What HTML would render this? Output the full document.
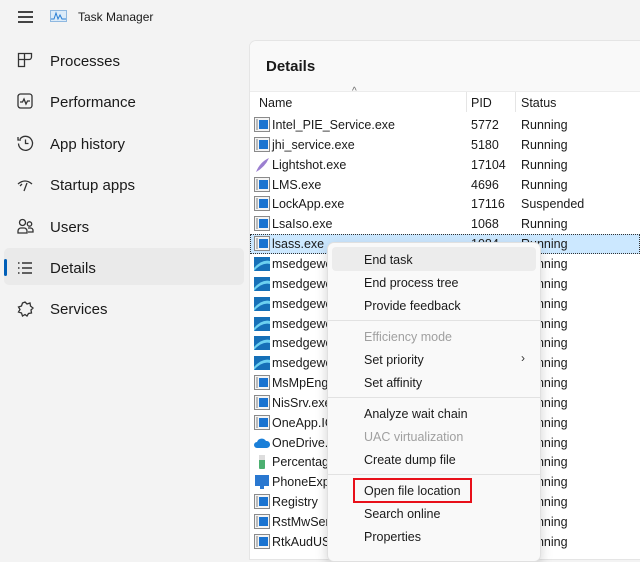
<!DOCTYPE html>
<html><head><meta charset="utf-8"><style>
*{margin:0;padding:0;box-sizing:border-box}
body{width:640px;height:552px;overflow:hidden;background:#f3f3f3;font-family:"Segoe UI","Liberation Sans",sans-serif;color:#1a1a1a;position:relative}
.a{position:absolute}
.nav{position:absolute;left:50px;font-size:15px;line-height:20px}
.ic{position:absolute;left:17px}
.row{position:absolute;left:250px;width:390px;height:20px;font-size:12.5px;line-height:20px}
.row .n{position:absolute;left:22px}
.row .p{position:absolute;left:221px}
.row .s{position:absolute;left:271px}
.row svg{position:absolute;left:4px;top:2px}
.mi{position:absolute;left:364px;font-size:12.5px;line-height:16px}
.dis{color:#a0a0a0}
.sep{position:absolute;left:328px;width:212px;height:1px;background:#e2e2e2}
</style></head><body>
<div class="a" style="left:18px;top:11px;width:15px;height:1.5px;background:#444"></div>
<div class="a" style="left:18px;top:16px;width:15px;height:1.5px;background:#444"></div>
<div class="a" style="left:18px;top:21px;width:15px;height:1.5px;background:#444"></div>
<svg class="a" style="left:50px;top:10px" width="17" height="12"><rect x="0.5" y="0.5" width="16" height="11" fill="#dcebf8" stroke="#8fb8e0"/><path d="M1 9 L4 9 L6 3 L8 9 L10 5 L12 9 L16 9" stroke="#2a7fd4" fill="none"/></svg>
<div class="a" style="left:78px;top:10px;font-size:12px">Task Manager</div>
<div class="a" style="left:4px;top:248px;width:240px;height:37px;background:#eaeaea;border-radius:5px"></div>
<div class="a" style="left:4px;top:259px;width:3px;height:17px;background:#005fb8;border-radius:2px"></div>
<svg class="ic" style="top:52px" width="18" height="18" fill="none" stroke="#333" stroke-width="1.3"><path d="M1.5 1.5h6v6h-6zM1.5 7.5v7h6v-7M7.5 1.5h7a0 0 0 0 1 0 0v3.5a2.5 2.5 0 0 1-2.5 2.5h-4.5"/></svg>
<div class="nav" style="top:52px">Processes</div>
<svg class="ic" style="top:93px" width="18" height="18" fill="none" stroke="#333" stroke-width="1.3"><rect x="1" y="1" width="14" height="14" rx="2.5"/><path d="M3 9h2.5l1.5-3 2 5 1.5-3h2.5"/></svg>
<div class="nav" style="top:93px">Performance</div>
<svg class="ic" style="top:135px" width="18" height="18" fill="none" stroke="#333" stroke-width="1.3"><path d="M3 4a7 7 0 1 1-1.5 4.5M1 2v3h3M8.5 4.5v4h3"/></svg>
<div class="nav" style="top:135px">App history</div>
<svg class="ic" style="top:177px" width="18" height="18" fill="none" stroke="#333" stroke-width="1.3"><path d="M1 7q7-6 14 0M7 14l3-8M3 9l2-2"/></svg>
<div class="nav" style="top:176px">Startup apps</div>
<svg class="ic" style="top:218px" width="18" height="18" fill="none" stroke="#333" stroke-width="1.3"><circle cx="5.5" cy="4.5" r="3"/><circle cx="12.5" cy="6" r="2.2"/><path d="M1 15v-2a3 3 0 0 1 3-3h3a3 3 0 0 1 3 3v2zM11 10h2.5a2.5 2.5 0 0 1 2.5 2.5v1.5h-5"/></svg>
<div class="nav" style="top:218px">Users</div>
<svg class="ic" style="top:260px" width="18" height="18" fill="none" stroke="#333" stroke-width="1.4"><path d="M1 3h1.5M1 8h1.5M1 13h1.5M5 3h10M5 8h10M5 13h10"/></svg>
<div class="nav" style="top:259px">Details</div>
<svg class="ic" style="top:301px" width="18" height="18" fill="none" stroke="#333" stroke-width="1.3"><path d="M8 1l2 2 3-1 .5 3 2.5 2-2 2 .5 3-3 .5-1.5 2.5-2-1.5-2.5 1.5-1-3-3-1 1.5-2.5-1.5-2.5 3-1 1-3z"/></svg>
<div class="nav" style="top:300px">Services</div>
<div class="a" style="left:249px;top:40px;width:400px;height:520px;background:#fff;border:1px solid #e5e5e5;border-radius:7px 0 0 0;overflow:hidden">
<div style="height:51px;background:#f9f9f9;border-bottom:1px solid #ececec"></div>
</div>
<div class="a" style="left:266px;top:58px;font-size:15px;font-weight:bold">Details</div>
<div class="a" style="left:352px;top:86px;font-size:10px;color:#666">^</div>
<div class="a" style="left:466px;top:92px;width:1px;height:20px;background:#e5e5e5"></div>
<div class="a" style="left:515px;top:92px;width:1px;height:20px;background:#e5e5e5"></div>
<div class="a" style="left:259px;top:96px;font-size:12.5px">Name</div>
<div class="a" style="left:471px;top:96px;font-size:12.5px">PID</div>
<div class="a" style="left:521px;top:96px;font-size:12.5px">Status</div>
<div class="a" style="left:250px;top:234px;width:390px;height:20px;background:#cce8ff;border:1px dotted #333"></div>
<div id="rows"></div>
<script>
var R=[["Intel_PIE_Service.exe","5772","Running","w"],["jhi_service.exe","5180","Running","w"],["Lightshot.exe","17104","Running","f"],["LMS.exe","4696","Running","w"],["LockApp.exe","17116","Suspended","w"],["LsaIso.exe","1068","Running","w"],["lsass.exe","1084","Running","w"],
["msedgewebview2.exe","","Running","e"],["msedgewebview2.exe","","Running","e"],["msedgewebview2.exe","","Running","e"],["msedgewebview2.exe","","Running","e"],["msedgewebview2.exe","","Running","e"],["msedgewebview2.exe","","Running","e"],
["MsMpEng.exe","","Running","w"],["NisSrv.exe","","Running","w"],["OneApp.IGCC","","Running","w"],["OneDrive.exe","","Running","c"],["Percentage","","Running","b"],["PhoneExp","","Running","p"],["Registry","","Running","w"],["RstMwService","","Running","w"],["RtkAudUService","","Running","w"]];
var I={w:'<rect x="0.5" y="0.5" width="15" height="14" fill="#f4f4f4" stroke="#8a8a8a"/><rect x="2" y="2" width="2" height="11" fill="#bbb"/><rect x="5" y="3" width="9" height="9" fill="#1a73d0"/>',
f:'<path d="M2 15Q6 5 15 1Q11 10 2 15z" fill="#9b7fd0"/>',
e:'<rect x="0" y="1" width="16" height="14" fill="#1670b8"/><path d="M0 12Q8 3 16 5V8Q8 6 0 15z" fill="#6cd0f0"/>',
c:'<path d="M3 13a3 3 0 0 1 0-6a5 5 0 0 1 9-1a3.5 3.5 0 0 1 1 7z" fill="#1a7fd8"/>',
b:'<rect x="5" y="1" width="6" height="14" rx="1" fill="#4caf70"/><rect x="5" y="1" width="6" height="5" fill="#ddd"/>',
p:'<rect x="1" y="1" width="14" height="11" fill="#2a78d0"/><rect x="6" y="12" width="4" height="3" fill="#2a78d0"/>'};
var h="";R.forEach(function(r,i){var y=115+i*19.85;h+='<div class="row" style="top:'+y+'px"><svg width="16" height="16">'+I[r[3]]+'</svg><span class="n">'+r[0]+'</span><span class="p">'+r[1]+'</span><span class="s">'+r[2]+'</span></div>'});
document.getElementById("rows").innerHTML=h;
</script>
<div class="a" style="left:327px;top:242px;width:214px;height:320px;background:#f9f9f9;border:1px solid #e0e0e0;border-radius:7px;box-shadow:0 4px 12px rgba(0,0,0,.18)"></div>
<div class="a" style="left:332px;top:247px;width:204px;height:24px;background:#ececec;border-radius:4px"></div>
<div class="mi" style="top:252px">End task</div>
<div class="mi" style="top:275px">End process tree</div>
<div class="mi" style="top:298px">Provide feedback</div>
<div class="sep" style="top:320px"></div>
<div class="mi dis" style="top:329px">Efficiency mode</div>
<div class="mi" style="top:352px">Set priority</div>
<div class="a" style="left:521px;top:351px;font-size:12px;color:#333">›</div>
<div class="mi" style="top:375px">Set affinity</div>
<div class="sep" style="top:397px"></div>
<div class="mi" style="top:406px">Analyze wait chain</div>
<div class="mi dis" style="top:429px">UAC virtualization</div>
<div class="mi" style="top:452px">Create dump file</div>
<div class="sep" style="top:474px"></div>
<div class="a" style="left:353px;top:478px;width:119px;height:25px;border:2.5px solid #e8101a"></div>
<div class="mi" style="top:483px">Open file location</div>
<div class="mi" style="top:506px">Search online</div>
<div class="mi" style="top:529px">Properties</div>
</body></html>
